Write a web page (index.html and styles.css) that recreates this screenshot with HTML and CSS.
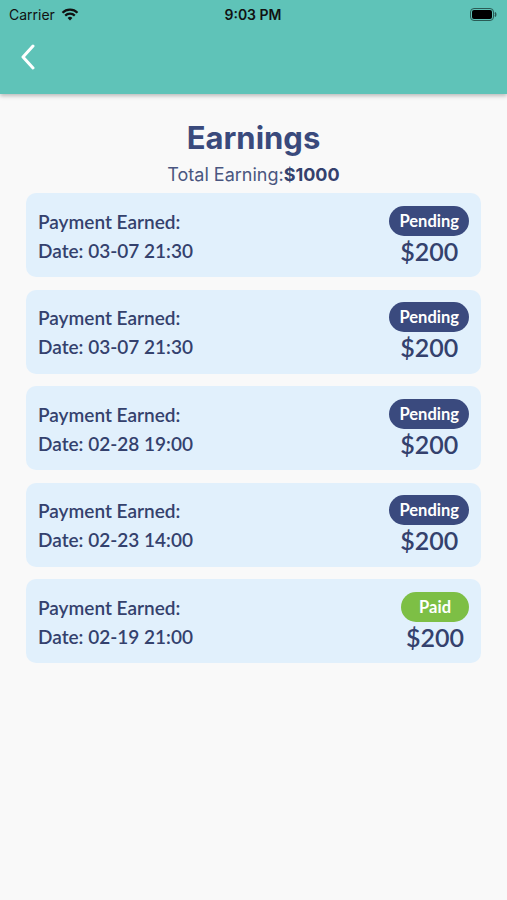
FILE: index.html
```html
<!DOCTYPE html>
<html lang="en">
<head>
  <meta charset="UTF-8">
  <meta name="viewport" content="width=device-width, initial-scale=1.0">
  <title>Earnings</title>
  <link rel="stylesheet" href="styles.css">
</head>
<body>
  <div class="header">
    <div class="status-bar">
      <div class="status-left">
        <span>Carrier</span>
        <svg class="wifi" width="18" height="13" viewBox="0 0 18 13">
          <path d="M9 12.5 L6.6 9.9 A3.4 3.4 0 0 1 11.4 9.9 Z" fill="#111"/>
          <path d="M4.2 7.6 A6.8 6.8 0 0 1 13.8 7.6" stroke="#111" stroke-width="2.2" fill="none"/>
          <path d="M1.5 4.8 A10.6 10.6 0 0 1 16.5 4.8" stroke="#111" stroke-width="2.2" fill="none"/>
        </svg>
      </div>
      <div class="status-time">9:03 PM</div>
      <div class="status-right">
        <svg width="27" height="13" viewBox="0 0 27 13">
          <rect x="0.5" y="0.5" width="23" height="12" rx="3.5" fill="none" stroke="#2a5b55" stroke-width="1"/>
          <rect x="2" y="2" width="20" height="9" rx="2" fill="#000"/>
          <path d="M25 4.5 Q26.5 6.5 25 8.5" stroke="#2a5b55" stroke-width="1.5" fill="none"/>
        </svg>
      </div>
    </div>
    <div class="nav-bar">
      <svg class="back" width="16" height="26" viewBox="0 0 16 26">
        <path d="M13 2 L3 13 L13 24" stroke="#fff" stroke-width="3" fill="none" stroke-linecap="round" stroke-linejoin="round"/>
      </svg>
    </div>
  </div>

  <div class="content">
    <h1 class="title">Earnings</h1>
    <div class="total">Total Earning:<b>$1000</b></div>

    <div class="list">
      <div class="card">
        <div class="card-info">
          <div>Payment Earned:</div>
          <div>Date: 03-07 21:30</div>
        </div>
        <div class="card-side">
          <span class="badge pending">Pending</span>
          <span class="amount">$200</span>
        </div>
      </div>
      <div class="card">
        <div class="card-info">
          <div>Payment Earned:</div>
          <div>Date: 03-07 21:30</div>
        </div>
        <div class="card-side">
          <span class="badge pending">Pending</span>
          <span class="amount">$200</span>
        </div>
      </div>
      <div class="card">
        <div class="card-info">
          <div>Payment Earned:</div>
          <div>Date: 02-28 19:00</div>
        </div>
        <div class="card-side">
          <span class="badge pending">Pending</span>
          <span class="amount">$200</span>
        </div>
      </div>
      <div class="card">
        <div class="card-info">
          <div>Payment Earned:</div>
          <div>Date: 02-23 14:00</div>
        </div>
        <div class="card-side">
          <span class="badge pending">Pending</span>
          <span class="amount">$200</span>
        </div>
      </div>
      <div class="card">
        <div class="card-info">
          <div>Payment Earned:</div>
          <div>Date: 02-19 21:00</div>
        </div>
        <div class="card-side">
          <span class="badge paid">Paid</span>
          <span class="amount">$200</span>
        </div>
      </div>
    </div>
  </div>
</body>
</html>
```

FILE: styles.css
```css
body {
  margin: 0;
  padding: 0;
  background-color: #f9f9f9;
  font-family: Lato, "Liberation Sans", sans-serif;
  color: #34416d;
}

.header {
  background-color: #5fc3b8;
  height: 94px;
  box-shadow: 0 2px 4px rgba(0, 0, 0, 0.25);
}

.status-bar {
  height: 28px;
  display: flex;
  align-items: center;
  justify-content: space-between;
  padding: 0 10px 0 9px;
  font-family: Inter, "Liberation Sans", sans-serif;
  font-size: 14px;
  color: #111;
}

.status-left {
  display: flex;
  align-items: center;
  gap: 6px;
  width: 120px;
}

.status-time {
  font-weight: 600;
}

.status-right {
  width: 120px;
  display: flex;
  justify-content: flex-end;
}

.nav-bar {
  height: 66px;
  display: flex;
  align-items: center;
  padding-left: 20px;
}

.back {
  margin-top: -8px;
}

.content {
  padding: 0 25px;
}

.title {
  margin: 24px 0 0;
  text-align: center;
  font-family: Inter, "Liberation Sans", sans-serif;
  font-size: 31px;
  font-weight: 700;
  color: #3a4a7c;
  line-height: 40px;
}

.total {
  text-align: center;
  font-family: Inter, "Liberation Sans", sans-serif;
  font-size: 18px;
  color: #4a5680;
  line-height: 22px;
  margin-top: 6px;
}

.total b {
  color: #34416d;
}

.list {
  display: flex;
  flex-direction: column;
  gap: 12.5px;
  margin-top: 7px;
  padding: 0 1px;
}

.card {
  background-color: #e1f0fc;
  border-radius: 10px;
  height: 84px;
  display: flex;
  justify-content: space-between;
  align-items: center;
  padding: 0 12px;
}

.card-info {
  font-size: 19px;
  font-weight: 600;
  line-height: 29px;
  padding-top: 1px;
}

.card-side {
  display: flex;
  flex-direction: column;
  align-items: center;
  gap: 1px;
}

.badge {
  color: #fff;
  font-weight: 700;
  font-size: 16.5px;
  line-height: 30px;
  border-radius: 15px;
  padding: 0 10px;
}

.pending {
  background-color: #3a4a7e;
}

.paid {
  background-color: #7dbf45;
  padding: 0 18px;
}

.amount {
  font-size: 25px;
  font-weight: 600;
  line-height: 28px;
}
```
